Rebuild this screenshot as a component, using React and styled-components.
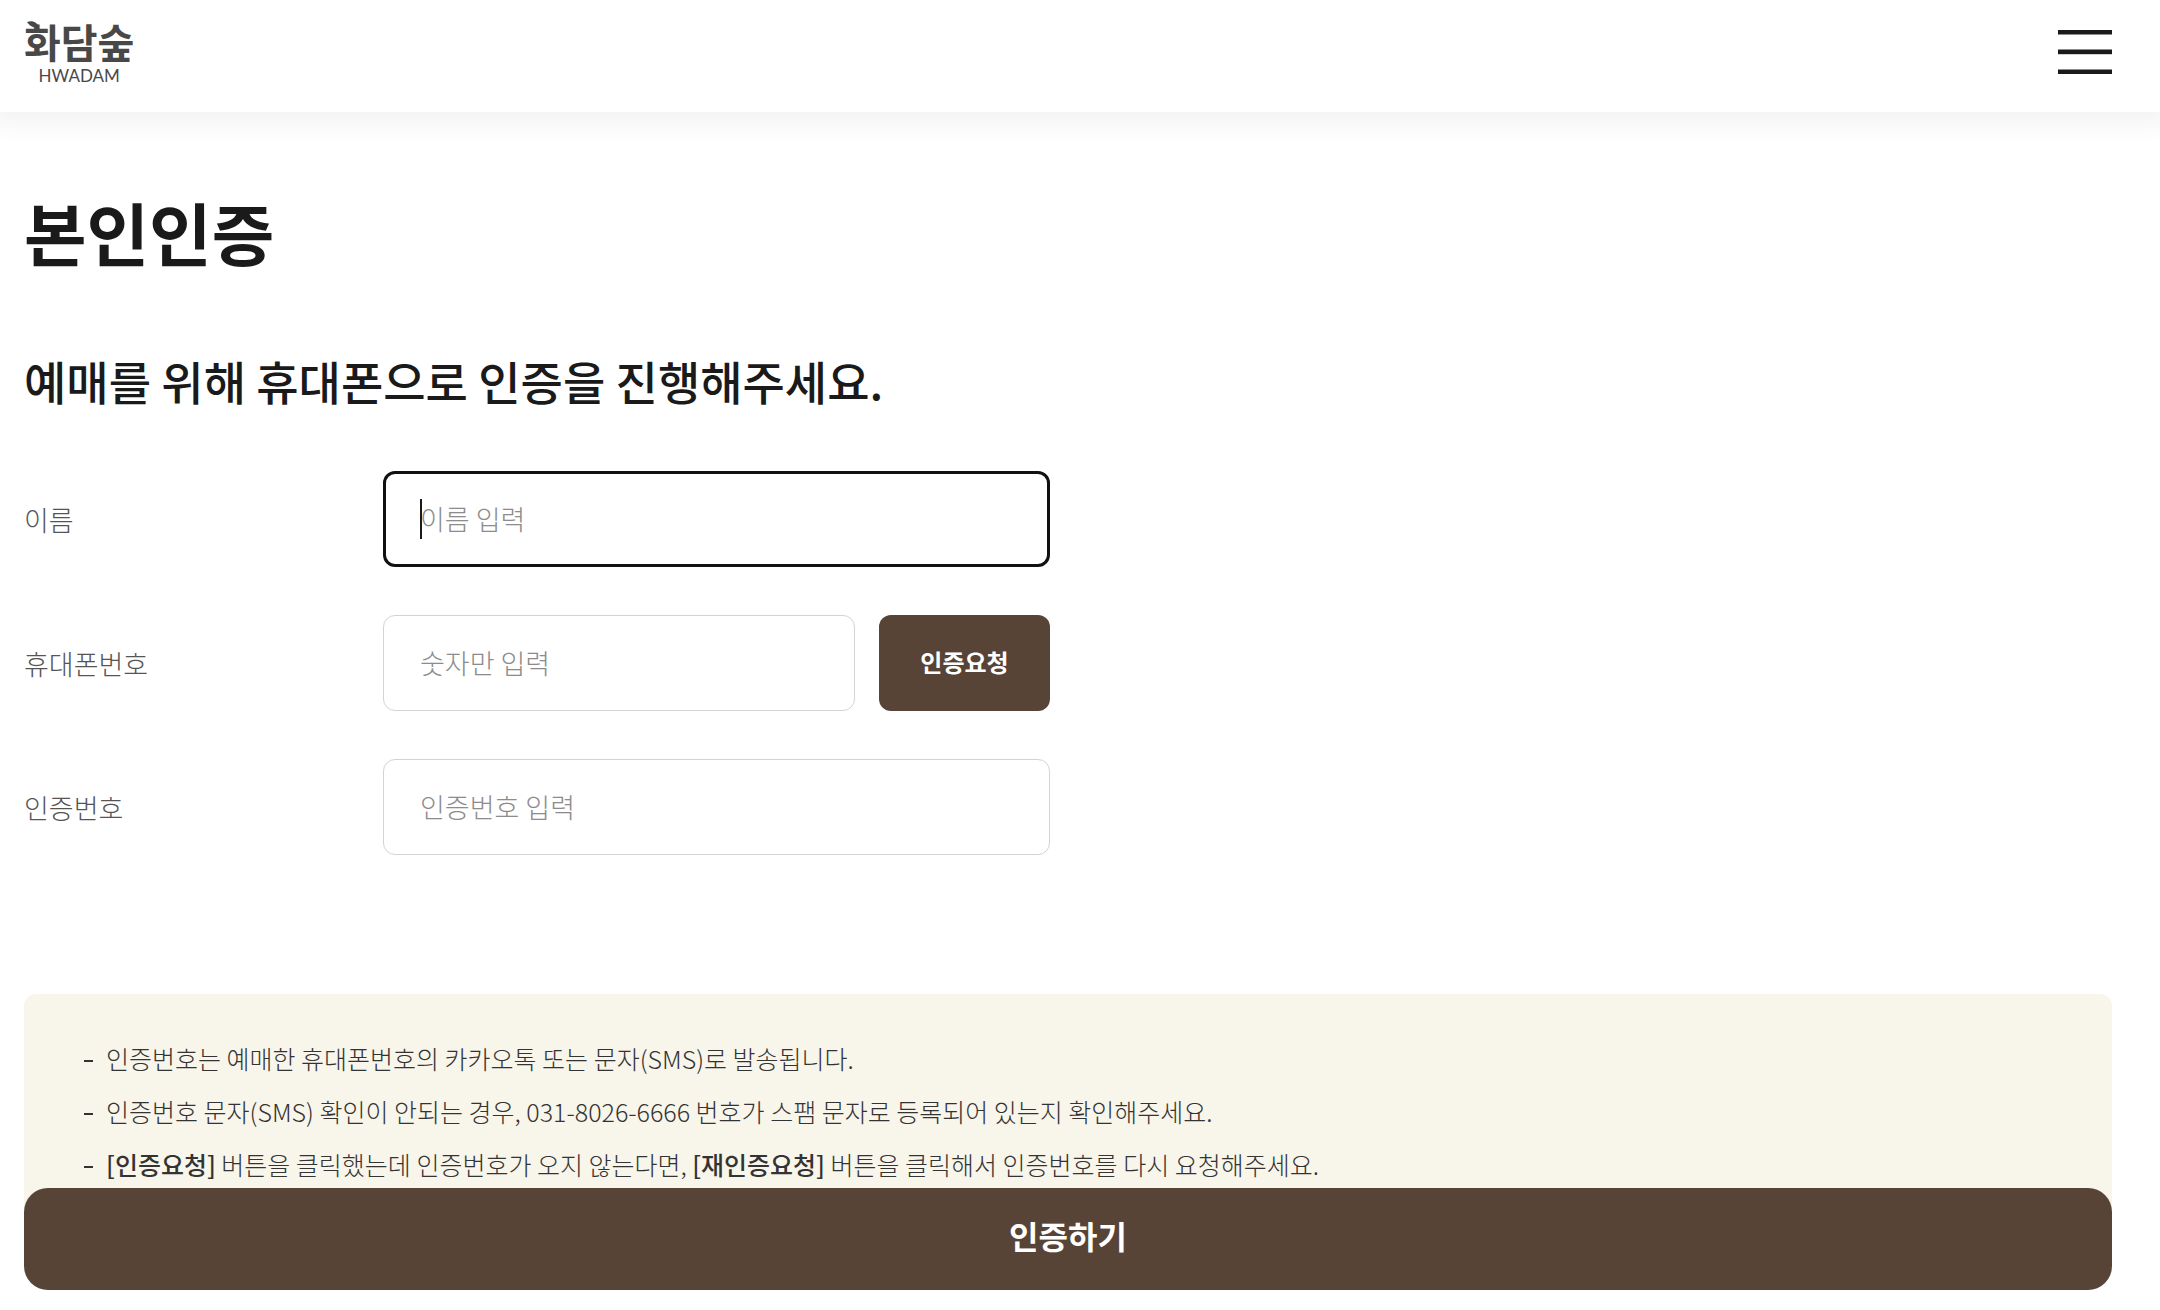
import React, { useState } from 'react';
import styled, { createGlobalStyle } from 'styled-components';

const GlobalStyle = createGlobalStyle`
  *, *::before, *::after {
    box-sizing: border-box;
  }

  body {
    margin: 0;
    background: #fff;
    color: #1a1a1a;
    font-family: 'Noto Sans CJK KR', 'Noto Sans', sans-serif;
    font-weight: 300;
  }

  button, input {
    font-family: inherit;
  }
`;

const Header = styled.header`
  display: flex;
  align-items: flex-start;
  justify-content: space-between;
  height: 112px;
  padding: 20px 48px 0 24px;
  background: #fff;
  box-shadow: 0 0 24px 12px rgba(0, 0, 0, 0.05);
`;

const Logo = styled.a`
  position: relative;
  display: flex;
  flex-direction: column;
  align-items: center;
  color: #484848;
  text-decoration: none;
`;

const LogoName = styled.span`
  font-size: 40px;
  font-weight: 700;
  line-height: 42px;
`;

const LogoLatin = styled.span`
  font-family: Lato, sans-serif;
  font-size: 17px;
  font-weight: 400;
  line-height: 28px;
`;

// Sits on the first syllable in place of its top stroke
const Leaf = styled.svg`
  position: absolute;
  top: 1px;
  left: 3px;
`;

const MenuButton = styled.button`
  display: flex;
  margin-top: 10px;
  padding: 0;
  border: 0;
  background: none;
  cursor: pointer;
`;

const Main = styled.main`
  padding: 72px 48px 40px 24px;
`;

const Title = styled.h1`
  margin: 0;
  font-size: 68px;
  font-weight: 700;
  line-height: 96px;
`;

const Subtitle = styled.h2`
  margin: 66px 0 0;
  font-size: 46px;
  font-weight: 500;
  line-height: 68px;
`;

const Form = styled.form`
  display: flex;
  flex-direction: column;
  gap: 48px;
  max-width: 1026px;
  margin-top: 57px;
`;

const Row = styled.div`
  display: grid;
  grid-template-columns: 359px 1fr;
  align-items: center;
`;

const Label = styled.label`
  padding-top: 2px;
  color: #555;
  font-size: 27px;
  line-height: 40px;
`;

const Field = styled.div`
  position: relative;
  display: flex;
  gap: 24px;
`;

const Input = styled.input`
  flex: 1;
  min-width: 0;
  height: 96px;
  padding: 0 36px 2px;
  border: 1px solid #d3d3d3;
  border-radius: 12px;
  background: #fff;
  color: #1a1a1a;
  font-size: 27px;
  font-weight: 300;

  &::placeholder {
    color: #8c8c8c;
    opacity: 1;
  }

  &:focus {
    padding: 0 34px 2px;
    border: 3px solid #111;
    outline: 0;
  }

  &:placeholder-shown {
    caret-color: transparent;
  }
`;

const Caret = styled.span`
  position: absolute;
  top: 28px;
  left: 37px;
  display: none;
  width: 2px;
  height: 40px;
  background: #1a1a1a;
  pointer-events: none;

  ${Input}:focus:placeholder-shown + & {
    display: block;
  }
`;

const RequestButton = styled.button`
  width: 171px;
  padding: 0 0 4px;
  border: 0;
  border-radius: 12px;
  background: #574436;
  color: #fff;
  font-size: 24px;
  font-weight: 700;
  cursor: pointer;
`;

const Notice = styled.ul`
  margin: 139px 0 0;
  padding: 38px 60px 40px;
  border-radius: 12px;
  background: #f8f5ea;
  list-style: none;
`;

const NoticeItem = styled.li`
  display: flex;
  gap: 13px;
  color: #333;
  font-size: 25px;
  line-height: 53px;

  &::before {
    content: '';
    width: 9px;
    height: 2px;
    margin-top: 28px;
    background: #333;
  }

  strong {
    font-weight: 500;
  }
`;

const SubmitButton = styled.button`
  position: fixed;
  right: 48px;
  bottom: 20px;
  left: 24px;
  height: 102px;
  padding: 0 0 8px;
  border: 0;
  border-radius: 24px;
  background: #574436;
  color: #fff;
  font-size: 32px;
  font-weight: 700;
  cursor: pointer;
`;

const MenuIcon = () => (
  <svg width="54" height="44" viewBox="0 0 54 44" fill="#1a1a1a" aria-hidden="true">
    <rect width="54" height="4.5" />
    <rect y="19.5" width="54" height="4.7" />
    <rect y="39.5" width="54" height="4.5" />
  </svg>
);

const LeafIcon = () => (
  <Leaf width="14" height="8" viewBox="0 0 14 8" fill="#484848" aria-hidden="true">
    <path d="M0 1C5-1 11 1 12 7C6 7 3 5 0 1Z" />
  </Leaf>
);

export default function App() {
  const [values, setValues] = useState({ name: '', phone: '', code: '' });

  const handleChange = e => setValues({ ...values, [e.target.id]: e.target.value });

  return (
    <>
      <GlobalStyle />
      <Header>
        <Logo href="#">
          <LeafIcon />
          <LogoName>화담숲</LogoName>
          <LogoLatin>HWADAM</LogoLatin>
        </Logo>
        <MenuButton type="button" aria-label="메뉴">
          <MenuIcon />
        </MenuButton>
      </Header>

      <Main>
        <Title>본인인증</Title>
        <Subtitle>예매를 위해 휴대폰으로 인증을 진행해주세요.</Subtitle>

        <Form id="verify" onSubmit={e => e.preventDefault()}>
          <Row>
            <Label htmlFor="name">이름</Label>
            <Field>
              <Input id="name" placeholder="이름 입력" value={values.name} onChange={handleChange} autoFocus />
              <Caret />
            </Field>
          </Row>
          <Row>
            <Label htmlFor="phone">휴대폰번호</Label>
            <Field>
              <Input id="phone" type="tel" placeholder="숫자만 입력" value={values.phone} onChange={handleChange} />
              <Caret />
              <RequestButton type="button">인증요청</RequestButton>
            </Field>
          </Row>
          <Row>
            <Label htmlFor="code">인증번호</Label>
            <Field>
              <Input id="code" placeholder="인증번호 입력" value={values.code} onChange={handleChange} />
              <Caret />
            </Field>
          </Row>
        </Form>

        <Notice>
          <NoticeItem>
            <span>인증번호는 예매한 휴대폰번호의 카카오톡 또는 문자(SMS)로 발송됩니다.</span>
          </NoticeItem>
          <NoticeItem>
            <span>인증번호 문자(SMS) 확인이 안되는 경우, 031-8026-6666 번호가 스팸 문자로 등록되어 있는지 확인해주세요.</span>
          </NoticeItem>
          <NoticeItem>
            <span>
              <strong>[인증요청]</strong> 버튼을 클릭했는데 인증번호가 오지 않는다면, <strong>[재인증요청]</strong> 버튼을 클릭해서 인증번호를 다시 요청해주세요.
            </span>
          </NoticeItem>
        </Notice>
      </Main>

      <SubmitButton type="submit" form="verify">인증하기</SubmitButton>
    </>
  );
}
